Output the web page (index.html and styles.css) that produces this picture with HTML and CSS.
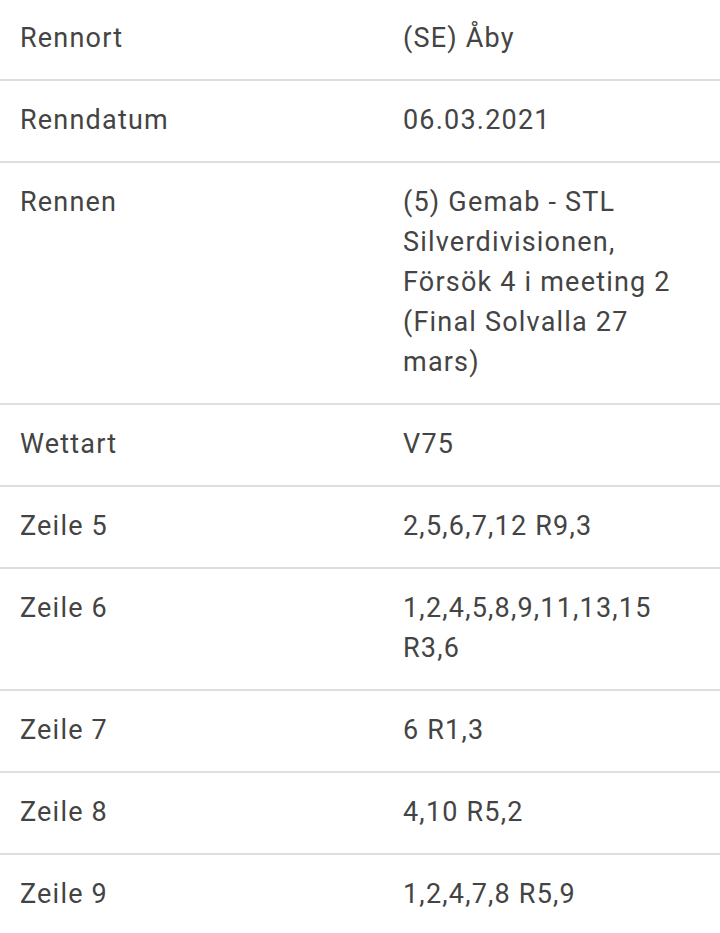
FILE: index.html
```html
<!DOCTYPE html>
<html lang="de">
<head>
<meta charset="utf-8">
<link rel="stylesheet" href="styles.css">
</head>
<body>
<div class="table">
  <div class="row"><div class="label">Rennort</div><div class="value">(SE) Åby</div></div>
  <div class="row"><div class="label">Renndatum</div><div class="value">06.03.2021</div></div>
  <div class="row"><div class="label">Rennen</div><div class="value">(5) Gemab - STL Silverdivisionen, Försök 4 i meeting 2 (Final Solvalla 27 mars)</div></div>
  <div class="row"><div class="label">Wettart</div><div class="value">V75</div></div>
  <div class="row"><div class="label">Zeile 5</div><div class="value">2,5,6,7,12 R9,3</div></div>
  <div class="row"><div class="label">Zeile 6</div><div class="value">1,2,4,5,8,9,11,13,15 R3,6</div></div>
  <div class="row"><div class="label">Zeile 7</div><div class="value">6 R1,3</div></div>
  <div class="row"><div class="label">Zeile 8</div><div class="value">4,10 R5,2</div></div>
  <div class="row"><div class="label">Zeile 9</div><div class="value">1,2,4,7,8 R5,9</div></div>
</div>
</body>
</html>
```
FILE: styles.css
```css
html, body {
  margin: 0;
  padding: 0;
  background: #ffffff;
}
body {
  font-family: Roboto, "Noto Sans", sans-serif;
  font-size: 27px;
  letter-spacing: 1.2px;
  line-height: 40px;
  color: #444444;
}
.table {
  margin-top: -1px;
  display: flex;
  flex-direction: column;
}
.row {
  display: grid;
  grid-template-columns: 383px 1fr;
  border-bottom: 2px solid #dedede;
}
.label, .value {
  padding: 19px 20px 21px 20px;
}
```
